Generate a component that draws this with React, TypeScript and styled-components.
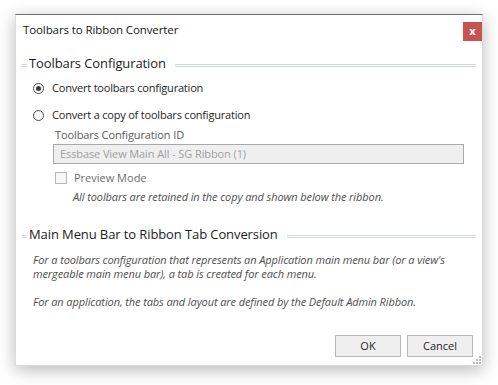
import React from "react";
import styled, { createGlobalStyle } from "styled-components";

const GlobalStyle = createGlobalStyle`
  html, body {
    margin: 0;
    padding: 0;
    background: #ffffff;
  }
  body {
    font-family: "Open Sans", "Noto Sans", sans-serif;
    color: #1e1e1e;
  }
`;

const Page = styled.div`
  width: 498px;
  height: 385px;
  padding: 14px 0 0 15px;
  box-sizing: border-box;
  overflow: hidden;
`;

const Dialog = styled.div`
  position: relative;
  width: 468px;
  height: 352px;
  box-sizing: border-box;
  background: #ffffff;
  border: 1px solid #dcdcdc;
  border-top: 1px solid #6f6f6f;
  box-shadow: 0 4px 16px rgba(0, 0, 0, 0.28);
  display: flex;
  flex-direction: column;
`;

const TitleBar = styled.div`
  display: flex;
  justify-content: space-between;
  align-items: flex-start;
  padding: 7px 0 0 7px;
`;

const Title = styled.div`
  font-size: 11.5px;
  letter-spacing: -0.1px;
  line-height: 16px;
  color: #161616;
`;

const CloseButton = styled.div`
  width: 19px;
  height: 19px;
  background: #c75252;
  color: #ffffff;
  font-size: 11px;
  font-weight: 700;
  line-height: 17px;
  text-align: center;
`;

const Body = styled.div`
  padding: 0 6px 0 6px;
  display: flex;
  flex-direction: column;
`;

const SectionHeader = styled.div<{ $top: number }>`
  display: flex;
  align-items: center;
  margin-top: ${(p) => p.$top}px;
  height: 18px;
`;

const Rule = styled.div<{ $grow?: boolean }>`
  height: 1px;
  border-top: 1px solid #d3d9df;
  border-bottom: 1px solid #d3d9df;
  margin-top: 4px;
  width: ${(p) => (p.$grow ? "auto" : "5px")};
  flex: ${(p) => (p.$grow ? 1 : "none")};
`;

const SectionTitle = styled.div`
  font-size: 13px;
  letter-spacing: -0.1px;
  line-height: 18px;
  color: #1c1c1c;
  padding: 0 9px 0 2px;
  white-space: nowrap;
`;

const RadioRow = styled.label<{ $top: number }>`
  display: flex;
  align-items: center;
  gap: 8px;
  margin: ${(p) => p.$top}px 0 0 11px;
  font-size: 11px;
  letter-spacing: -0.2px;
  line-height: 18px;
  color: #1e1e1e;
`;

const RadioCircle = styled.span<{ $checked?: boolean }>`
  width: 11px;
  height: 11px;
  box-sizing: border-box;
  border: 1px solid #4a4a4a;
  border-radius: 50%;
  display: flex;
  align-items: center;
  justify-content: center;
  &::after {
    content: "";
    display: ${(p) => (p.$checked ? "block" : "none")};
    width: 5px;
    height: 5px;
    border-radius: 50%;
    background: #3a3a3a;
  }
`;

const SubBlock = styled.div`
  margin-left: 31px;
  display: flex;
  flex-direction: column;
`;

const FieldLabel = styled.div`
  margin: 3px 0 0 2px;
  font-size: 11px;
  letter-spacing: -0.1px;
  line-height: 16px;
  color: #5a5a5a;
`;

const TextInput = styled.div`
  margin-top: 1px;
  width: 411px;
  height: 20px;
  box-sizing: border-box;
  background: #efefef;
  border: 1px solid #a9a9ad;
  padding: 0 6px;
  font-size: 11px;
  letter-spacing: -0.1px;
  line-height: 18px;
  color: #a0a0a0;
`;

const CheckRow = styled.div`
  display: flex;
  align-items: center;
  gap: 7px;
  margin: 6px 0 0 2px;
  font-size: 11px;
  line-height: 16px;
  color: #6e6e6e;
`;

const CheckBox = styled.span`
  width: 12px;
  height: 12px;
  box-sizing: border-box;
  border: 1px solid #b5b5b5;
  background: #f7f7f7;
`;

const Note = styled.div<{ $indent: number; $top: number }>`
  margin: ${(p) => p.$top}px 0 0 ${(p) => p.$indent}px;
  font-size: 11px;
  letter-spacing: -0.1px;
  line-height: 14px;
  font-style: italic;
  color: #4e4e4e;
  white-space: pre-line;
`;

const Footer = styled.div`
  margin-top: auto;
  display: flex;
  justify-content: flex-end;
  gap: 6px;
  padding: 0 9px 8px 0;
`;

const Button = styled.div`
  width: 66px;
  height: 22px;
  box-sizing: border-box;
  border: 1px solid #b9b9b9;
  background: #efefef;
  font-size: 11px;
  line-height: 20px;
  text-align: center;
  color: #1e1e1e;
`;

const Grip = styled.svg`
  position: absolute;
  right: 1px;
  bottom: 1px;
`;

const App: React.FC = () => {
  return (
    <Page>
      <GlobalStyle />
      <Dialog>
        <TitleBar>
          <Title>Toolbars to Ribbon Converter</Title>
          <CloseButton>x</CloseButton>
        </TitleBar>
        <Body>
          <SectionHeader $top={13}>
            <Rule />
            <SectionTitle>Toolbars Configuration</SectionTitle>
            <Rule $grow />
          </SectionHeader>
          <RadioRow $top={7}>
            <RadioCircle $checked />
            Convert toolbars configuration
          </RadioRow>
          <RadioRow $top={9}>
            <RadioCircle />
            Convert a copy of toolbars configuration
          </RadioRow>
          <SubBlock>
            <FieldLabel>Toolbars Configuration ID</FieldLabel>
            <TextInput>Essbase View Main All - SG Ribbon (1)</TextInput>
            <CheckRow>
              <CheckBox />
              Preview Mode
            </CheckRow>
            <Note $indent={20} $top={4}>
              All toolbars are retained in the copy and shown below the ribbon.
            </Note>
          </SubBlock>
          <SectionHeader $top={21}>
            <Rule />
            <SectionTitle>Main Menu Bar to Ribbon Tab Conversion</SectionTitle>
            <Rule $grow />
          </SectionHeader>
          <Note $indent={11} $top={10}>
            {"For a toolbars configuration that represents an Application main menu bar (or a view's\nmergeable main menu bar), a tab is created for each menu.\n\nFor an application, the tabs and layout are defined by the Default Admin Ribbon."}
          </Note>
        </Body>
        <Footer>
          <Button>OK</Button>
          <Button>Cancel</Button>
        </Footer>
        <Grip width="8" height="8" viewBox="0 0 8 8">
          {[
            [6, 0],
            [6, 3],
            [3, 3],
            [6, 6],
            [3, 6],
            [0, 6],
          ].map(([x, y], i) => (
            <rect key={i} x={x} y={y} width="2" height="2" fill="#b8b8b8" />
          ))}
        </Grip>
      </Dialog>
    </Page>
  );
};

export default App;
